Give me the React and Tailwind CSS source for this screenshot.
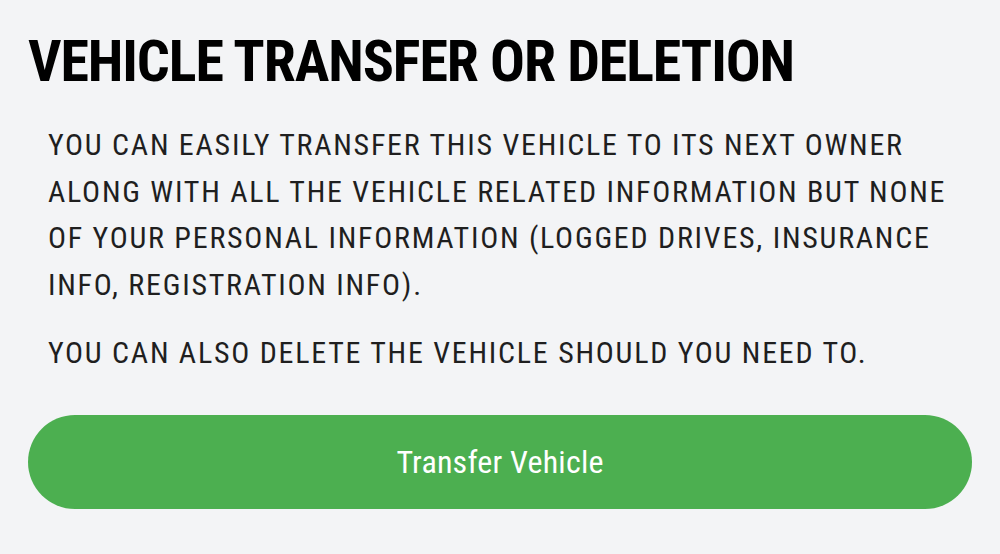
import React from "react"

export default function App() {
  return (
    <div className="min-h-[554px] w-[1000px] bg-[#f3f4f6] px-[28px] pt-[26px] font-['Roboto',sans-serif] [font-stretch:condensed]">
      <h1 className="text-[58px] font-bold leading-[70px] text-black tracking-[-1.1px]">
        VEHICLE TRANSFER OR DELETION
      </h1>
      <div className="mt-[26px] px-[20px] text-[30px] leading-[46.7px] text-[#1f1f1f] tracking-[1.75px]">
        <p>
          YOU CAN EASILY TRANSFER THIS VEHICLE TO ITS NEXT OWNER ALONG WITH ALL THE VEHICLE RELATED
          INFORMATION BUT NONE OF YOUR PERSONAL INFORMATION (LOGGED DRIVES, INSURANCE INFO, REGISTRATION
          INFO).
        </p>
        <p className="mt-[21px]">YOU CAN ALSO DELETE THE VEHICLE SHOULD YOU NEED TO.</p>
      </div>
      <button className="mt-[38px] flex h-[94px] w-full items-center justify-center rounded-full bg-[#4caf50] text-[32px] text-white tracking-[0.2px]">
        Transfer Vehicle
      </button>
    </div>
  )
}
